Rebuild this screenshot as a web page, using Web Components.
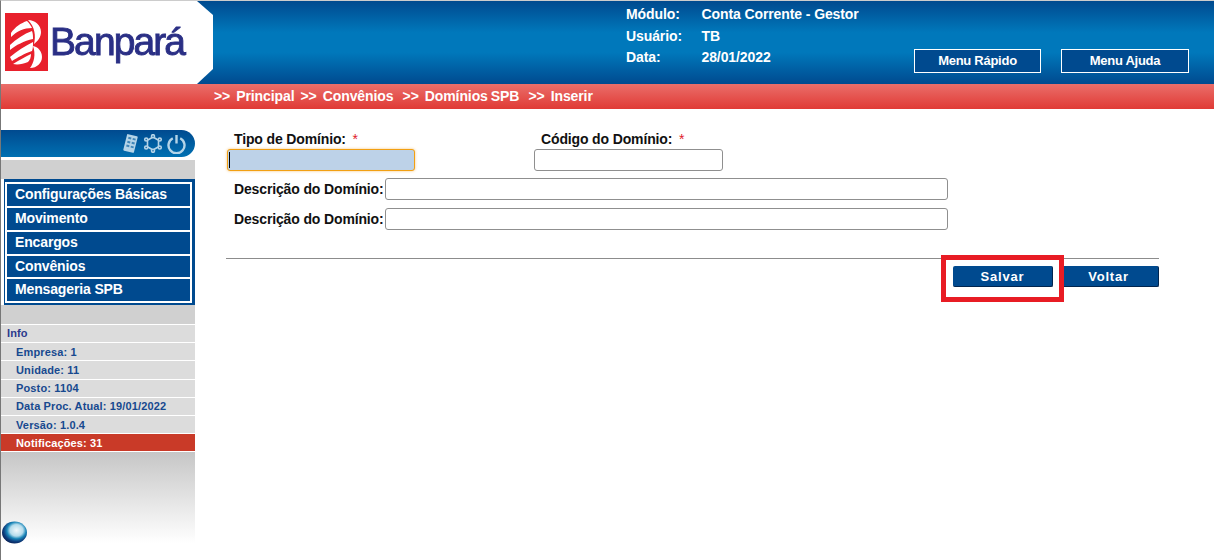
<!DOCTYPE html>
<html lang="pt-BR"><head><meta charset="utf-8"><title>Banpará</title>
<style>
html,body{margin:0;padding:0;height:560px;overflow:hidden;background:#fff;font-family:"Liberation Sans",Arial,sans-serif}
bp-app{height:560px}
</style></head><body>
<bp-app>
  <bp-header slot="header" modulo="Conta Corrente - Gestor" usuario="TB" data="28/01/2022"></bp-header>
  <bp-crumbs slot="crumbs"></bp-crumbs>
  <bp-sidebar slot="side"></bp-sidebar>
  <bp-form slot="main"></bp-form>
</bp-app>
<script>
function def(name,html,setup){
  customElements.define(name,class extends HTMLElement{
    constructor(){super();const r=this.attachShadow({mode:'open'});r.innerHTML=html;}
    connectedCallback(){if(setup)setup(this);}
  });
}
def('bp-app',`<style>
:host{display:flex;flex-direction:column;box-sizing:border-box;border-top:1px solid #ccc;border-left:1px solid #777;width:1214px;height:560px}
.body{display:flex;flex:1;min-height:0}
</style><slot name="header"></slot><slot name="crumbs"></slot><div class="body"><slot name="side"></slot><slot name="main"></slot></div>`);

def('bp-header',`<style>
:host{display:flex;height:83px;background:linear-gradient(#004a8f 0,#0078bb 38%,#0078bb 62%,#004a8f 100%);color:#fff;font:bold 14px "Liberation Sans",Arial,sans-serif;letter-spacing:-.1px}
.wrap{width:213px;flex:none;filter:blur(.45px)}
.logo{height:83px;background:#fff;clip-path:polygon(0 0,196px 0,212px 14px,212px 68px,196px 83px,0 83px);display:flex;align-items:flex-start;padding:12px 0 0 4px;box-sizing:border-box;gap:2px}
.logo svg{flex:none;display:block}
.brand{font:39px/46px "Liberation Sans",Arial,sans-serif;color:#2a2f85;letter-spacing:-1.9px;-webkit-text-stroke:.9px #2a2f85;margin-top:6px}
.info{margin-left:412px;padding-top:2px;display:grid;grid-template-columns:75.500px auto;grid-auto-rows:21.7px;align-items:center;align-self:flex-start}
.btns{display:flex;gap:20px;margin-left:auto;margin-right:25px;margin-top:48px;align-self:flex-start}
button{box-sizing:border-box;height:24px;width:127px;background:#004a8f;border:1px solid #fff;color:#fff;font:bold 13px "Liberation Sans",Arial,sans-serif;letter-spacing:-.27px;padding:0 0 2px}
button+button{width:128px}
</style>
<div class="wrap"><div class="logo">
<svg width="43" height="58" viewBox="0 0 43 58"><rect width="43" height="58" fill="#e8202c"/>
<g fill="#fff">
<path d="M23 7C30 7 36 12 36 19 36 24 33 28 29 31 31 23 30 14 23 7Z"/>
<path d="M28 33C33 34 37 38 37 44 37 50 32 55 25 55 29 50 31 41 28 33Z"/>
<path d="M6 20C10 14 16 10 22 8 25 11 26 13 27 15 19 15 12 18 6 24Z"/>
<path d="M5 32C11 26 19 21 27 18 28 21 28 23 28 26 19 28 11 32 5 37Z"/>
<path d="M5 44C12 38 20 33 28 29 28 33 28 35 27 38 20 40 12 45 7 48Z"/>
<path d="M8 51C14 47 20 44 26 41 26 44 25 47 23 49 18 51 13 52 8 51Z"/>
</g></svg>
<span class="brand">Banpará</span></div></div>
<div class="info"><span>Módulo:</span><span id="m"></span><span>Usuário:</span><span id="u"></span><span>Data:</span><span id="d"></span></div>
<div class="btns"><button>Menu Rápido</button><button>Menu Ajuda</button></div>`,
el=>{const s=el.shadowRoot;s.getElementById('m').textContent=el.getAttribute('modulo');s.getElementById('u').textContent=el.getAttribute('usuario');s.getElementById('d').textContent=el.getAttribute('data');});

def('bp-crumbs',`<style>
:host{display:block;height:25px;background:linear-gradient(#ea6e6a,#e03a35);color:#fff;font:bold 14px/25px "Liberation Sans",Arial,sans-serif;padding-left:213px;white-space:pre;letter-spacing:-.1px;word-spacing:-.75px}
</style>&gt;&gt;  Principal  &gt;&gt;  Convênios   &gt;&gt;  Domínios SPB   &gt;&gt;  Inserir`);

def('bp-sidebar',`<style>
:host{display:flex;flex-direction:column;width:194px;flex:none;margin-top:21px;height:413px;font-family:"Liberation Sans",Arial,sans-serif}
.pill{height:27px;background:linear-gradient(#004a8f,#0070b2);border-radius:0 14px 14px 0;display:flex;align-items:center;justify-content:flex-end;gap:4px;padding-right:9px;box-sizing:border-box}
.pill svg{display:block;flex:none;filter:blur(.35px)}
.gap{height:3px}
.grey{background:#d0d0d0;height:19px}
nav{background:#004a8f;margin-left:3px;padding:3px 3px 2px 1px;height:126px;box-sizing:border-box;display:flex;flex-direction:column}
nav div{box-sizing:border-box;height:24px;flex:none;border:solid #fff;border-width:2px 2px 0;color:#fff;font:bold 14px/21px "Liberation Sans",Arial,sans-serif;letter-spacing:-.14px;padding-left:8px}
nav div:nth-child(4){height:23px}
nav div:last-child{height:26px;border-bottom-width:2px}
.grey2{background:#d0d0d0;height:19px}
.info{border-top:1px solid #fff;font:bold 11px "Liberation Sans",Arial,sans-serif;color:#17498f}
.info div{height:17.2px;line-height:18px;background:#dcdcdc;border-bottom:1px solid #fff;padding-left:15px;letter-spacing:.14px}
.info div:nth-child(4),.info div:nth-child(5){line-height:16px}
.info div.h{padding-left:6px;color:#2b3a8c;line-height:17px}
.info div.n{background:#c93a28;color:#fff}
.fade{flex:1;background:linear-gradient(#c6c6c6,#fff);display:flex;align-items:flex-end;padding-left:1px}
.fade svg{display:block;margin-bottom:-1px;filter:blur(.5px)}
</style>
<div class="pill">
<svg width="17" height="19" viewBox="0 0 17 19"><g transform="rotate(14 8.500 9.500)" fill="#b4d4e8"><path d="M4 1h9a1 1 0 0 1 1 1v15a1 1 0 0 1-1 1H4a1 1 0 0 1-1-1V2a1 1 0 0 1 1-1z"/><g fill="#3f86b8"><rect x="5" y="3.500" width="3" height="2"/><rect x="9.500" y="3.500" width="3" height="2"/><rect x="5" y="7.500" width="3" height="2"/><rect x="9.500" y="7.500" width="3" height="2"/><rect x="5" y="11.500" width="3" height="2"/><rect x="9.500" y="11.500" width="3" height="2"/></g></g></svg>
<svg width="20" height="19" viewBox="0 0 20 19" fill="none" stroke="#b4d4e8" stroke-width="1.600"><path d="M10 3 15.500 6.200V12.800L10 16 4.500 12.800V6.200Z"/><g fill="#0b5f9f"><circle cx="10" cy="2.200" r="1.500"/><circle cx="10" cy="16.800" r="1.500"/><circle cx="3.200" cy="5.500" r="1.500"/><circle cx="16.800" cy="5.500" r="1.500"/><circle cx="3.200" cy="13.500" r="1.500"/><circle cx="16.800" cy="13.500" r="1.500"/></g></svg>
<svg width="19" height="20" viewBox="0 0 19 20" fill="none" stroke="#b4d4e8" stroke-width="2.400"><path d="M5.800 4.200A8 8 0 1 0 13.200 4.200"/><path d="M9.500 1v8.500"/></svg>
</div>
<div class="gap"></div>
<div class="grey"></div>
<nav><div>Configurações Básicas</div><div>Movimento</div><div>Encargos</div><div>Convênios</div><div>Mensageria SPB</div></nav>
<div class="grey2"></div>
<div class="info"><div class="h">Info</div><div>Empresa: 1</div><div>Unidade: 11</div><div>Posto: 1104</div><div>Data Proc. Atual: 19/01/2022</div><div>Versão: 1.0.4</div><div class="n">Notificações: 31</div></div>
<div class="fade"><svg width="25" height="23" viewBox="0 0 25 23"><defs><radialGradient id="b" cx=".58" cy=".4" r=".62"><stop offset="0" stop-color="#f2f8fb"/><stop offset=".42" stop-color="#b5dcec"/><stop offset=".62" stop-color="#1a86b8"/><stop offset=".82" stop-color="#0d3f7f"/><stop offset="1" stop-color="#0a2358"/></radialGradient></defs><ellipse cx="12.500" cy="11.500" rx="12.500" ry="11" fill="url(#b)"/></svg></div>`);

def('bp-form',`<style>
:host{display:block;position:relative;margin-left:31px;width:933px;font:bold 14px "Liberation Sans",Arial,sans-serif;letter-spacing:-.14px;color:#111}
.top{display:flex;padding-top:21px;margin-left:1px}
.f{width:188px;margin-right:119px}
.f label{display:block;padding-left:7px;height:19px;line-height:18px}
.f label i{color:#e0202a;font-style:normal;font-weight:normal;margin-left:3px}
input{box-sizing:border-box;display:block;height:22px;border:1px solid #8f8f8f;border-radius:3px;padding:0;background:#fff;margin:0;outline:none}
.f input{width:100%}
.f:nth-child(2) input{width:189px}
input.focus{border-color:#f2a012;box-shadow:0 0 3px #f7c47a;background:#bdd2e8 linear-gradient(#000,#000) no-repeat 1px center/1px 16px}
.r{display:grid;grid-template-columns:159px 563px;align-items:center;margin-top:7px}
.r+.r{margin-top:8px}
.r label{padding-left:8px;white-space:nowrap}
hr{border:0;border-top:1px solid #8c8c8c;margin:28px 0 0;height:0}
.acts{display:flex;justify-content:flex-end;gap:6px;margin-top:7px}
button{box-sizing:border-box;width:100px;height:21px;background:#004a8f;color:#fff;border:0;border-bottom:1px solid #00254f;border-right:1px solid #00254f;border-radius:2px;font:bold 13px "Liberation Sans",Arial,sans-serif;padding:0;letter-spacing:.8px}
.mark{position:absolute;left:715px;top:146px;width:123px;height:47px;box-sizing:border-box;border:5px solid #e81c24;pointer-events:none}
</style>
<div class="top">
<div class="f"><label>Tipo de Domínio: <i>*</i></label><input class="focus"></div>
<div class="f"><label>Código do Domínio: <i>*</i></label><input></div>
</div>
<div class="r"><label>Descrição do Domínio:</label><input style="width:563px"></div>
<div class="r"><label>Descrição do Domínio:</label><input style="width:563px"></div>
<hr>
<div class="acts"><button>Salvar</button><button>Voltar</button></div>
<div class="mark"></div>`);
</script>
</body></html>
